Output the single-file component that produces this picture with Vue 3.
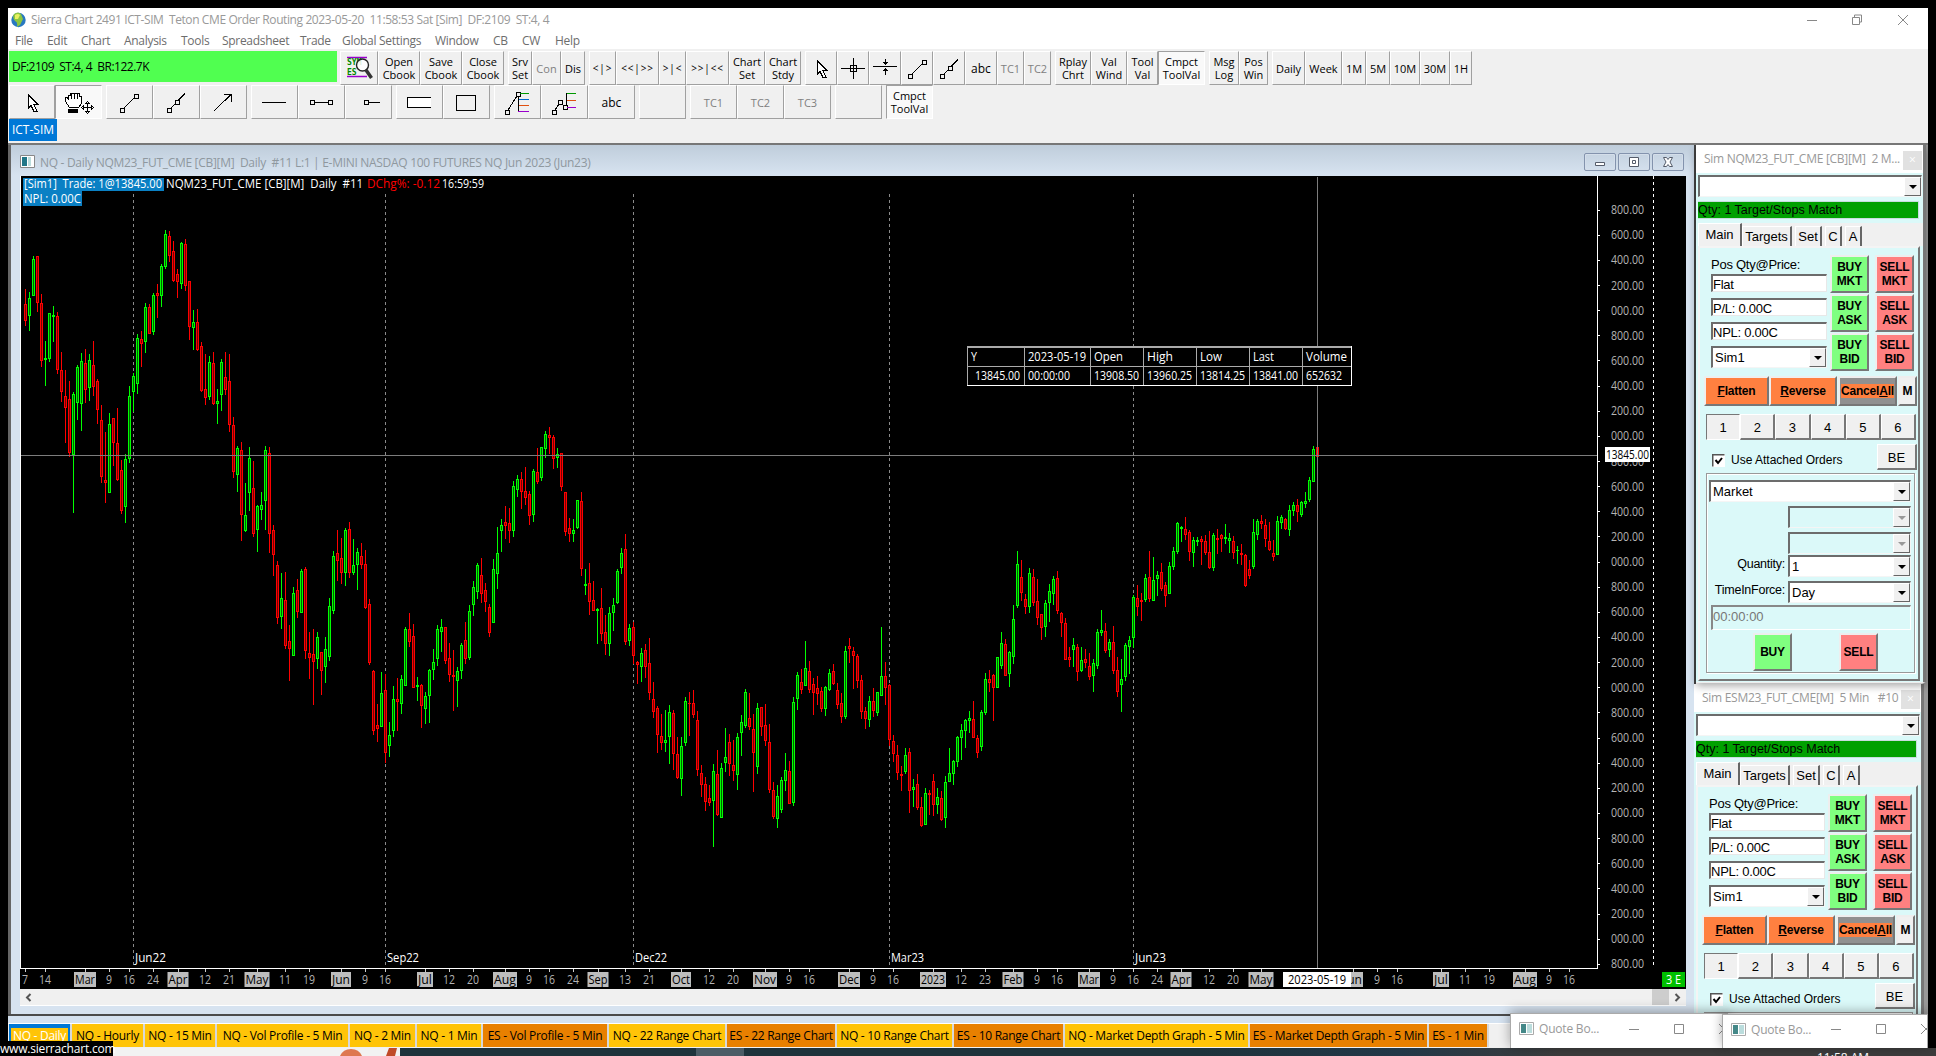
<script setup>
const menu = [
  ['File', 32], ['Edit', 34], ['Chart', 43], ['Analysis', 57], ['Tools', 41], ['Spreadsheet', 78],
  ['Trade', 42], ['Global Settings', 93], ['Window', 58], ['CB', 29], ['CW', 33], ['Help', 30],
]

const node = (x, y) => `M${x - 2} ${y - 2}h4v4h-4z`
const icons = {
  pointer: [{ d: 'M20 9.5v14l3-3 3 6h3l-3-7h4z', fill: '#fff' }],
  hand: [
    { d: 'M15.5 22.5l-4-6v-4h2l1 2v-4h2v-2h9v3h2v7l-3 4z', fill: '#fff' },
    { d: 'M17.5 9v5M20.5 9v5M23.5 9v5' },
    { d: 'M14.5 24.500h9v3h-9z', fill: '#000' },
    { d: 'M33.5 17v11M28 22.5h11' },
    { d: 'M31.5 18.5l2-2 2 2zM31.5 26.5l2 2 2-2zM29.5 20.500l-2 2 2 2zM37.5 20.500l2 2-2 2z', fill: '#fff' },
  ],
  cross: [{ d: 'M12 17.5h24M24.5 7v21' }, { d: 'M21.5 14.5h6v6h-6z' }],
  spread: [{ d: 'M12 15.5h24' }, { d: 'M24.5 8v5M22.5 11l2 2 2-2M24.5 24v-6M22.5 20l2-2 2 2' }],
  line: [{ d: `M19 23L29 13${node(17, 25)}${node(31, 11)}` }],
  ray: [{ d: `M19 23L23.5 18.5M26.5 15L33 8.5${node(17, 25)}${node(25, 17)}` }],
  arrow: [{ d: 'M15 26L32 9.5M25 9.5h7v7' }],
  hline: [{ d: 'M12 17.5h24' }],
  segment: [{ d: `M17 17.5h14${node(15, 17.5)}${node(33, 17.5)}` }],
  hray: [{ d: `M24 17.5h12${node(22, 17.5)}` }],
  band: [{ d: 'M36 12.5H12.5v10H36', fill: '#fff' }],
  box: [{ d: 'M14.5 10.5h19v15h-19z' }],
  fib: [
    { d: `M15 25L24 11${node(14, 27)}${node(25, 9)}M25.5 11v16` },
    { d: 'M27 8.5h9', stroke: '#090' }, { d: 'M26 14.5h10', stroke: '#06c' },
    { d: 'M26 20.5h10', stroke: '#e05010' }, { d: 'M25 26.5h11', stroke: '#90c' },
  ],
  fibext: [
    { d: `M15 25l4-6M22 19l2 2${node(14, 27)}${node(20, 17)}${node(25, 22)}M26.5 8v13` },
    { d: 'M27 8.5h9', stroke: '#090' }, { d: 'M27 15.5h9', stroke: '#e05010' }, { d: 'M27 22.5h9', stroke: '#90c' },
  ],
}

// label, width, state
const row1 = [
  [['@search', 38], ['Open\nCbook', 42], ['Save\nCbook', 42], ['Close\nCbook', 42]],
  [['Srv\nSet', 24], ['Con', 29, 'off'], ['Dis', 24]],
  [['<|>', 27, 'sp'], ['<<|>>', 43, 'sp'], ['>|<', 27, 'sp'], ['>>|<<', 43, 'sp'], ['Chart\nSet', 36], ['Chart\nStdy', 36]],
  [['@pointer', 32], ['@cross', 32], ['@spread', 32], ['@line', 32], ['@ray', 32], ['abc', 32, 'abc'], ['TC1', 27, 'off'], ['TC2', 27, 'off']],
  [['Rplay\nChrt', 36], ['Val\nWind', 36], ['Tool\nVal', 31], ['Cmpct\nToolVal', 47, 'on']],
  [['Msg\nLog', 30], ['Pos\nWin', 29]],
  [['Daily', 33], ['Week', 37], ['1M', 24], ['5M', 24], ['10M', 30], ['30M', 30], ['1H', 22]],
]
const row2 = [
  [['@pointer', 46], ['@hand', 47, 'on']],
  [['@line', 47], ['@ray', 47], ['@arrow', 47]],
  [['@hline', 47], ['@segment', 47], ['@hray', 47]],
  [['@band', 47], ['@box', 47]],
  [['@fib', 47], ['@fibext', 47], ['abc', 47, 'abc']],
  [['', 47]],
  [['TC1', 47, 'off'], ['TC2', 47, 'off'], ['TC3', 47, 'off']],
  [['', 47]],
  [['Cmpct\nToolVal', 47, 'on']],
]

// bars: direction, then high / body top / body bottom / low
const older = `r233,272,316,329 g240,257,303,342 g146,154,252,252 r147,147,269,293 r246,268,420,436 g368,413,417,486 g295,296,415,423 g277,301,305,371 r293,303,443,455 r397,444,501,528
r444,512,543,635 r473,520,660,671 g502,507,667,818 g431,436,530,575 g400,421,532,604 r389,426,496,531 g402,419,490,525 r368,431,488,512 r468,473,550,585 r536,575,723,740
r606,732,739,792 g557,585,765,765 r570,570,634,695 r544,635,731,734 r679,706,812,821 g664,677,801,844 g486,513,678,687 g452,460,501,554 g350,361,480,507 r342,363,375,436
g269,280,370,400 r272,280,349,350 g243,247,344,353 r220,244,250,308 g167,173,250,280 g78,90,174,180 r81,94,146,162 r107,133,211,214 r180,194,213,256 g110,112,219,233
r102,115,224,238 r212,212,331,366 g287,320,334,392 r285,320,391,395 r371,382,498,502 r402,495,517,536 g408,423,514,523 r397,427,532,536 g494,525,532,585 g416,423,509,551
r397,463,496,510 r402,474,587,606 r567,589,710,727 g643,648,718,763 r632,654,822,891 g740,822,866,868 g645,675,765,813 r682,753,874,881 g797,800,861,920 g763,797,809,836
g643,652,786,862 r645,661,872,923 r849,862,927,983 r943,955,1091,1108 g975,1041,1089,1121 r972,1046,1165,1173 r1111,1152,1172,1257 g1011,1028,1191,1192 r990,1020,1077,1092 g964,970,1078,1079
r959,965,1178,1200 r1129,1184,1196,1252 r1121,1187,1206,1320 g1129,1143,1199,1226 r1182,1182,1230,1294 g1142,1174,1219,1262 g1040,1062,1193,1205 g917,931,1073,1082 r862,923,942,996 r883,936,974,1004
g857,861,974,1009 r841,860,974,988 g886,955,974,980 g909,921,955,1019 r896,931,953,964 r915,950,1066,1069 r1043,1056,1209,1214 r1228,1231,1387,1398 r1317,1373,1381,1416 g1233,1289,1376,1377
r1239,1281,1444,1471 g1364,1397,1428,1456 g1270,1305,1387,1403 r1249,1304,1311,1387 g1241,1252,1316,1343 g1116,1120,1269,1270 r1079,1122,1154,1168 r1108,1140,1274,1275 g1247,1268,1272,1309 r1265,1268,1321,1380
g1286,1295,1329,1369 g1226,1229,1295,1367 g1173,1206,1227,1254 g1111,1120,1199,1218 g1095,1117,1128,1181 r1117,1117,1204,1213 r1158,1198,1241,1260 r1176,1240,1246,1335 g1220,1232,1256,1325 g1158,1164,1230,1252
r1103,1150,1199,1213 g1059,1075,1196,1201 g996,1012,1057,1087 g949,955,1023,1043 r936,981,1029,1053 r1001,1020,1050,1077 r1056,1064,1131,1142 g938,963,1104,1105 g855,923,976,1017 g834,848,864,920
r800,842,851,886 r805,845,864,896 g734,748,864,881 g719,730,757,776 r711,730,762,808 r698,761,778,797 r760,769,827,849 g703,709,822,841 r648,712,736,742 g645,646,726,734
g604,612,650,674 r593,614,621,664 r614,620,676,703 g648,665,673,700 r661,661,749,760 r763,764,867,878 r831,858,872,894 g834,861,874,894 g784,785,856,860 r763,787,963,983
g964,1004,1008,1033 r949,1001,1050,1085 r996,1046,1073,1074 g1066,1070,1073,1160`
const recent = `r564,624,702,723 r645,696,732,765 g621,639,732,768 g594,615,639,693 g507,513,609,612 g444,459,504,522 r402,447,726,735 g672,684,723,738 r666,681,768,792 r783,786,795,852
g744,759,801,846 r732,750,801,834 r714,789,879,900 r846,897,936,954 r918,924,1005,1059 r942,1008,1029,1050 g930,1020,1029,1056 g915,936,1011,1092 r930,939,1062,1110 r1011,1062,1134,1137
g1011,1038,1137,1188 g891,903,1029,1038 r876,909,912,1008 r870,909,945,954 r933,960,1110,1128 r1095,1119,1155,1191 r1131,1152,1206,1233 r1155,1194,1209,1218 g1092,1113,1203,1341 r1050,1122,1245,1248
g1089,1104,1254,1254 g984,1071,1089,1116 r1002,1026,1092,1128 r1020,1095,1113,1143 g999,1011,1125,1170 g945,966,999,1068 g867,876,978,984 r879,954,981,990 r942,987,1059,1176 g909,924,1101,1122
r921,921,981,1008 r912,975,1023,1038 r972,1026,1170,1179 r1146,1170,1251,1257 g1155,1188,1257,1284 g1131,1140,1230,1239 g1059,1110,1143,1173 r1083,1113,1212,1212 g891,906,1209,1218 g816,825,897,930
r807,846,870,882 g723,804,858,858 r783,813,870,879 r834,852,879,945 r828,864,882,915 r861,873,927,936 g858,861,927,948 g807,819,870,873 r792,813,852,855 r849,870,915,927
r879,909,951,969 g738,753,951,957 r714,738,747,789 r741,753,768,867 r762,768,843,864 r825,840,936,957 r921,933,957,987 g888,903,960,981 r864,903,933,951 g876,876,939,948
g681,828,888,888 r786,828,864,915 r852,855,1020,1038 r1005,1023,1062,1086 r1035,1065,1119,1140 r1098,1122,1128,1173 g1044,1065,1116,1122 r1044,1056,1173,1239 g1137,1161,1170,1221 r1122,1152,1224,1230
r1191,1221,1278,1281 g1164,1179,1275,1275 r1170,1179,1185,1245 r1122,1143,1215,1248 g1164,1191,1215,1242 r1173,1194,1260,1263 g1128,1146,1254,1284 g1044,1119,1146,1146 g1080,1083,1122,1155 g1008,1011,1086,1101
g972,990,1014,1080 g957,960,993,1044 g933,954,963,999 r903,957,1014,1014 r1005,1014,1059,1074 g930,936,1041,1053 g819,837,939,945 r810,837,849,876 r822,825,864,963 g771,771,864,864
g696,729,798,807 r717,732,828,828 g753,756,822,861 g615,657,771,792 g453,492,618,624 r480,531,579,603 r582,597,621,642 g504,519,621,639 r507,531,609,618 r537,603,654,675
r642,642,684,720 g600,609,681,711 g552,573,609,666 g528,537,582,615 r513,534,633,642 r636,639,669,711 r654,669,780,780 r741,771,780,801 g714,735,750,801 r732,741,816,843
g741,780,813,816 r747,777,789,804 r759,798,831,840 g777,789,828,876 g687,696,798,807 g630,690,699,708 r669,693,753,759 g717,726,750,771 r678,726,813,822 r771,810,876,891
g777,837,855,936 g729,735,831,843 g708,720,741,822 g585,591,714,744 r555,594,621,648 r579,600,606,663 g522,534,600,606 r453,531,597,606 g471,540,603,603 g513,525,537,588
r489,516,567,573 r546,555,588,621 g486,498,582,582 g441,453,501,510 g366,369,456,462 g378,381,387,426 r351,387,405,420 r390,396,456,483 g411,420,459,501 g411,420,426,438
r408,417,426,495 r405,423,459,465 r393,456,504,507 g399,405,504,513 r387,414,420,462 r402,405,417,456 g372,411,417,432 g399,414,423,459 r408,423,459,477 g438,450,453,492
r432,459,465,495 r462,465,558,561 r480,507,528,537 g357,396,501,507 g357,363,405,420 r345,363,372,387 r357,375,417,441 r366,423,450,453 r420,459,471,483 g348,363,465,465
g345,351,369,387 r354,357,387,390 g315,330,390,408 g306,315,333,348 r297,315,336,366 g303,306,345,351 g276,303,312,324 g231,240,300,306 g138,147,245,246 r120,141,171,172`

function parse(text, top, scale) {
  return text.split(/\s+/).map((s) => ({
    up: s[0] === 'g',
    y: s.slice(1).split(',').map((v) => Math.round(top + v / scale)),
  }))
}
const bars = [...parse(older, 200, 2.613), ...parse(recent, 400, 3)].map((b, i) => {
  const [hi, top, bottom, lo] = b.y
  return { x: 25 + i * 4, up: b.up, hi, lo, top, h: Math.max(bottom - top, 1) }
})

const quarters = [['Jun22', 133, 31], ['Sep22', 385, 32], ['Dec22', 633, 32], ['Mar23', 889, 33], ['Jun23', 1133, 31]]
const levels = ['800', '600', '400', '200', '000']
const prices = Array.from({ length: 31 }, (_, i) => ({ t: levels[i % 5] + '.00', y: 209.6 + i * 25.14 }))
const boxes = { Mar: 22, Apr: 21, May: 25, Jun: 20, Jul: 16, Aug: 24, Sep: 21, Oct: 20, Nov: 24, Dec: 22, 2023: 26, Feb: 21 }
const dates = `7:25 14:45 Mar:85 9:109 16:129 24:153 Apr:178 12:205 21:229 May:257 11:285 19:309 Jun:341 9:365 16:385 Jul:425 12:449 20:473 Aug:505 9:529 16:549 24:573
Sep:598 13:625 21:649 Oct:681 12:709 20:733 Nov:765 9:789 16:809 Dec:849 9:873 16:893 2023:933 12:961 23:985 Feb:1013 9:1037 16:1057 Mar:1089 9:1113 16:1133 24:1157 Apr:1181 12:1209 20:1233
May:1261 Jun:1353 9:1377 16:1397 Jul:1441 11:1465 19:1489 Aug:1525 9:1549 16:1569`.split(/\s+/).map((s) => {
  const [t, x] = s.split(':')
  return { t, x: +x, box: boxes[t], w: boxes[t] ? boxes[t] - 2 : t.length * 6 }
})

const quote = [
  ['Y', '13845.00', 967], ['2023-05-19', '00:00:00', 1024], ['Open', '13908.50', 1090], ['High', '13960.25', 1143],
  ['Low', '13814.25', 1196], ['Last', '13841.00', 1249], ['Volume', '652632', 1302],
]
const quoteW = { Y: 6, '2023-05-19': 58, Open: 29, High: 26, Low: 22, Last: 21, Volume: 41 }

const panels = [
  { title: 'Sim NQM23_FUT_CME [CB][M]  2 M...', cls: 'first' },
  { title: 'Sim ESM23_FUT_CME[M]  5 Min   #10', cls: 'second' },
]

const chartTabs = [
  ['NQ - Daily', 63, 'cur'], ['NQ - Hourly', 73], ['NQ - 15 Min', 72], ['NQ - Vol Profile - 5 Min', 133], ['NQ - 2 Min', 67], ['NQ - 1 Min', 66],
  ['ES - Vol Profile - 5 Min', 126, 'es'], ['NQ - 22 Range Chart', 118], ['ES - 22 Range Chart', 110, 'es'], ['NQ - 10 Range Chart', 117],
  ['ES - 10 Range Chart', 111, 'es'], ['NQ - Market Depth Graph - 5 Min', 185], ['ES - Market Depth Graph - 5 Min', 179, 'es'], ['ES - 1 Min', 60, 'es'],
]
</script>

<template>
  <div class="screen">
    <div class="window">
      <div class="titlebar">
        <svg class="globe" width="15" height="16" viewBox="0 0 15 16">
          <circle cx="7.5" cy="8" r="7.2" fill="#2878c0" />
          <path d="M3 2q4-3 7 0l2 5-3 6-3 2q1-5-2-6-3-3-1-7" fill="#8dc63f" />
          <path d="M4 3q3-2 5 0l-2 4-3 0" fill="#e8f060" />
        </svg>
        <span class="app-title">Sierra Chart 2491 ICT-SIM&nbsp; Teton CME Order Routing 2023-05-20&nbsp; 11:58:53 Sat [Sim]&nbsp; DF:2109&nbsp; ST:4, 4</span>
        <svg class="sysbtns" width="110" height="14" viewBox="0 0 110 14" fill="none" stroke="#888">
          <path d="M0 7.5h10M45.5 4.5h7v7h-7zM47.5 4v-2h7v7h-2M91 2l10 10M101 2L91 12" />
        </svg>
      </div>
      <div class="menubar">
        <span v-for="m in menu" :key="m[0]" :style="{ width: m[1] + 'px' }">{{ m[0] }}</span>
      </div>

      <div class="toolbars">
        <div v-for="(row, r) in [row1, row2]" :key="r" class="toolrow">
          <div v-if="r === 0" class="status">DF:2109&nbsp; ST:4, 4&nbsp; BR:122.7K</div>
          <div v-for="(group, g) in row" :key="g" class="group">
            <div v-for="(b, i) in group" :key="i" class="tool" :class="b[2]" :style="{ width: b[1] + 'px' }">
              <svg v-if="b[0] === '@search'" width="30" height="26" viewBox="0 0 30 26">
                <path d="M3 2.5h20M3 21.5h20" stroke="#90c" stroke-width="1.5" />
                <text class="sym" x="3" y="10">SYM</text>
                <text class="sym" x="3" y="20">ES</text>
                <circle cx="18.5" cy="10" r="6" fill="#fff" fill-opacity=".85" stroke="#222" stroke-width="1.4" />
                <path d="M22 15l5.5 8" stroke="#333" stroke-width="3.5" />
              </svg>
              <svg v-else-if="b[0][0] === '@'" width="45" height="32" viewBox="2 1 45 32" shape-rendering="crispEdges">
                <path v-for="(p, k) in icons[b[0].slice(1)]" :key="k" :d="p.d" :fill="p.fill || 'none'" :stroke="p.stroke || '#000'" />
              </svg>
              <span v-else>{{ b[0] }}</span>
            </div>
          </div>
        </div>
        <div class="session">ICT-SIM</div>
      </div>

      <div class="mdi">
        <div class="chart-window">
          <div class="chart-title">
            <svg width="15" height="13" viewBox="0 0 15 13">
              <path d="M.5.5h14v12h-14z" fill="#fff" stroke="#888" />
              <path d="M2 2h5v9H2z" fill="#278" /><path d="M8 2h3v9H8z" fill="#bdd" />
            </svg>
            <span>NQ - Daily NQM23_FUT_CME [CB][M]&nbsp; Daily&nbsp; #11 L:1 | E-MINI NASDAQ 100 FUTURES NQ Jun 2023 (Jun23)</span>
            <div class="mdi-btns">
              <i><svg width="12" height="12" viewBox="0 0 12 12"><path d="M1.5 6.5h9v3h-9z" /></svg></i>
              <i><svg width="12" height="12" viewBox="0 0 12 12"><path d="M1.5 1.5h9v9h-9zM4.5 4.5h3v3h-3z" /></svg></i>
              <i><svg width="12" height="12" viewBox="0 0 12 12"><path d="M1.5 1.5h3l1.5 2 1.5-2h3L8 6l2.5 4.5h-3L6 8.5l-1.5 2h-3L4 6z" /></svg></i>
            </div>
          </div>

          <svg class="chart" width="1666" height="813" viewBox="20 176 1666 813">
            <g shape-rendering="crispEdges">
              <path v-for="q in quarters" :key="q[1]" :d="`M${q[1] + 0.5} 194V966`" stroke="#8a8a8a" stroke-dasharray="3 3" />
              <path d="M20.5 176V968M20 968.5H1598M1597.5 176V969" stroke="#fff" />
              <path d="M1653.5 176V967" stroke="#fff" stroke-dasharray="3 3" />
              <path v-for="p in prices" :key="p.y" :d="`M1598 ${Math.round(p.y) + 0.5}h2`" stroke="#fff" />
              <path v-for="d in dates" :key="d.x" :d="`M${d.x + 0.5} 969v3`" stroke="#ccc" />
              <g v-for="b in bars" :key="b.x" :class="b.up ? 'up' : 'down'">
                <rect class="wick" :x="b.x" :y="b.hi" width="1" :height="b.lo - b.hi" />
                <rect class="edge" :x="b.x - 1" :y="b.top" width="3" :height="b.h" />
                <rect v-if="b.h > 2" class="core" :x="b.x" :y="b.top + 1" width="1" :height="b.h - 2" />
              </g>
              <path d="M21 455.5H1597M1317.5 177V968" stroke="#7c7c7c" />
            </g>

            <path d="M23 178h141v13H82v15H23z" fill="#0a80c4" />
            <g class="bright">
              <text x="24" y="188" textLength="138" lengthAdjust="spacingAndGlyphs">[Sim1]&#160; Trade: 1@13845.00</text>
              <text x="24" y="203" textLength="57" lengthAdjust="spacingAndGlyphs">NPL: 0.00C</text>
              <text x="166" y="188" textLength="197" lengthAdjust="spacingAndGlyphs">NQM23_FUT_CME [CB][M]&#160; Daily&#160; #11</text>
              <text class="chg" x="367" y="188" textLength="73" lengthAdjust="spacingAndGlyphs">DChg%: -0.12</text>
              <text x="442" y="188" textLength="42" lengthAdjust="spacingAndGlyphs">16:59:59</text>
              <text v-for="q in quarters" :key="q[0]" :x="q[1] + 2" y="962" :textLength="q[2]" lengthAdjust="spacingAndGlyphs">{{ q[0] }}</text>
            </g>
            <g class="axis">
              <text v-for="p in prices" :key="p.y" x="1611" :y="p.y + 4.5" textLength="33" lengthAdjust="spacingAndGlyphs">{{ p.t }}</text>
              <g v-for="d in dates" :key="d.x">
                <rect v-if="d.box" :x="d.x - d.box / 2" y="972" :width="d.box" height="15" fill="#bdbdbd" />
                <text :class="{ month: d.box }" :x="d.x - d.w / 2" y="984" :textLength="d.w" lengthAdjust="spacingAndGlyphs">{{ d.t }}</text>
              </g>
            </g>
            <path d="M1605 447h45v15h-45zM1283 972h68v15h-68z" fill="#fff" />
            <text class="tag" x="1606" y="459" textLength="43" lengthAdjust="spacingAndGlyphs">13845.00</text>
            <text class="tag" x="1288" y="984" textLength="58" lengthAdjust="spacingAndGlyphs">2023-05-19</text>
            <path d="M1662 972h23v15h-23z" fill="#00c000" />
            <text class="bright" x="1666" y="984" textLength="15" lengthAdjust="spacingAndGlyphs">3 E</text>

            <g>
              <path d="M967 346h385v40H967z" fill="#000" />
              <g class="bright">
                <template v-for="(c, i) in quote" :key="c[0]">
                  <text :x="c[2] + 4" y="361" :textLength="quoteW[c[0]]" lengthAdjust="spacingAndGlyphs">{{ c[0] }}</text>
                  <text :x="c[2] + (i ? 4 : 8)" y="380" :textLength="i === 1 ? 42 : i === 6 ? 36 : 45" lengthAdjust="spacingAndGlyphs">{{ c[1] }}</text>
                </template>
              </g>
              <g shape-rendering="crispEdges" fill="none">
                <path d="M967 366.5h385" stroke="#aaa" />
                <path v-for="c in quote" :key="c[2]" :d="`M${c[2] + 0.5} 347v39`" stroke="#aaa" />
                <path d="M967 347h385" stroke="#aaa" stroke-width="2" />
                <path d="M967 385.5h385M1351.5 346v40" stroke="#fff" />
              </g>
            </g>
          </svg>

          <div class="scroll">
            <svg width="7" height="9" viewBox="0 0 7 9"><path d="M5.5 1L2 4.5 5.5 8" /></svg>
            <b></b>
            <svg width="7" height="9" viewBox="0 0 7 9"><path d="M1.5 1L5 4.5 1.5 8" /></svg>
          </div>
        </div>

        <div class="side">
          <div v-for="p in panels" :key="p.cls" class="panel" :class="p.cls">
            <div class="panel-title"><span>{{ p.title }}</span><em>×</em></div>
            <div class="panel-body">
              <div class="combo symbol"><span></span><u></u></div>
              <div class="match">Qty: 1 Target/Stops Match</div>
              <div class="tabs">
                <span class="main">Main</span><span class="targets">Targets</span><span class="set">Set</span><span class="sm">C</span><span class="sm">A</span>
              </div>
              <div class="page">
                <div class="position">
                  <div class="fields">
                    <label>Pos Qty@Price:</label>
                    <div class="field">Flat</div>
                    <div class="field">P/L: 0.00C</div>
                    <div class="field">NPL: 0.00C</div>
                    <div class="combo acct"><span>Sim1</span><u></u></div>
                  </div>
                  <div class="orders">
                    <template v-for="k in ['MKT', 'ASK', 'BID']" :key="k">
                      <div class="btn buy">BUY<br />{{ k }}</div>
                      <div class="btn sell">SELL<br />{{ k }}</div>
                    </template>
                  </div>
                </div>
                <div class="actions">
                  <div class="btn orange fl"><span><s>F</s>latten</span></div>
                  <div class="btn orange rv"><span><s>R</s>everse</span></div>
                  <div class="btn cancel"><span>Cancel<s>A</s>ll</span></div>
                  <div class="btn m">M</div>
                </div>
                <div class="qty">
                  <span v-for="n in 6" :key="n" :class="{ pressed: n === 1 }">{{ n }}</span>
                </div>
                <div class="attach">
                  <svg width="13" height="13" viewBox="0 0 13 13">
                    <path d="M0 0h13v13H0z" fill="#fff" /><path d="M.5 12.5V.5h12" fill="none" stroke="#555" stroke-width="2" />
                    <path d="M3.5 6l2.5 3 4-5" fill="none" stroke="#000" stroke-width="2" />
                  </svg>
                  <span>Use Attached Orders</span>
                  <div class="be">BE</div>
                </div>
                <div class="entry">
                  <div class="combo"><span>Market</span><u></u></div>
                  <div class="combo short off"><span></span><u></u></div>
                  <div class="combo short off"><span></span><u></u></div>
                  <div class="line q"><label>Quantity:</label><div class="combo short"><span>1</span><u></u></div></div>
                  <div class="line"><label>TimeInForce:</label><div class="combo short"><span>Day</span><u></u></div></div>
                  <div class="time">00:00:00</div>
                  <div class="send"><div class="btn buy">BUY</div><div class="btn sell">SELL</div></div>
                </div>
              </div>
            </div>
          </div>
        </div>
      </div>

      <div class="under"></div>
      <div class="chart-tabs">
        <div v-for="t in chartTabs" :key="t[0]" :class="t[2]" :style="{ width: t[1] + 'px' }"><span>{{ t[0] }}</span></div>
      </div>
    </div>

    <div class="taskbar">
      <div class="search-box">
        <svg width="60" height="8" viewBox="0 0 60 8"><path d="M0 8q3-7 11-7t11 7z" fill="#de7850" /><path d="M46 8l3-8h8l-2 8z" fill="#c04a28" /></svg>
      </div>
      <div class="task"></div>
      <div class="clock">11:58 AM</div>
    </div>

    <div v-for="n in 2" :key="n" class="quote-board" :class="'qb' + n">
      <svg width="15" height="13" viewBox="0 0 15 13">
        <path d="M.5.5h14v12h-14z" fill="#fff" stroke="#aaa" />
        <path d="M2 2h5v9H2z" fill="#488" /><path d="M8 2h5v9H8z" fill="#bdd" />
      </svg>
      <span>Quote Bo...</span>
      <svg width="108" height="12" viewBox="0 0 108 12" fill="none" stroke="#888">
        <path d="M0 6.5h10M45.5 1.5h9v9h-9zM90 1l10 10M100 1L90 11" />
      </svg>
    </div>
    <div class="link">www.sierrachart.com</div>
  </div>
</template>

<style>
body {
  margin: 0;
  background: #000;
  overflow: hidden;
}
</style>

<style scoped>
.screen {
  position: relative;
  box-sizing: border-box;
  width: 1936px;
  height: 1056px;
  padding: 8px 8px 0;
  overflow: hidden;
  background: #000;
  font-family: 'Open Sans', 'Noto Sans', sans-serif;
  font-size: 12px;
  color: #000;
}
.screen * {
  box-sizing: border-box;
}
.window {
  display: flex;
  flex-direction: column;
  height: 1040px;
  background: #f0f0f0;
}
.titlebar {
  display: flex;
  align-items: center;
  height: 23px;
  padding-left: 3px;
  background: #fff;
  color: #999;
}
.app-title {
  flex: 1;
  margin-left: 5px;
  font-size: 12px;
  letter-spacing: -0.4px;
}
.sysbtns {
  margin-right: 11px;
}
.menubar {
  display: flex;
  height: 18px;
  padding-left: 7px;
  background: #fff;
  color: #6d6d6d;
  font-size: 12px;
  line-height: 19px;
  letter-spacing: -0.3px;
  white-space: nowrap;
}

.toolbars {
  height: 94px;
  padding: 2px 0 0 1px;
}
.toolrow {
  display: flex;
  gap: 4px;
  height: 34px;
}
.status {
  width: 328px;
  height: 31px;
  margin: 0 -1px 0 0;
  background: #50ff50;
  line-height: 31px;
  padding-left: 3px;
  letter-spacing: -0.5px;
}
.group {
  display: flex;
}
.tool {
  display: flex;
  align-items: center;
  justify-content: center;
  height: 34px;
  overflow: hidden;
  border: 1px solid #fff;
  border-right-color: #a0a0a0;
  border-bottom-color: #a0a0a0;
  font-size: 11px;
  line-height: 13px;
  text-align: center;
  white-space: pre;
}
.tool svg {
  flex: none;
}
.tool.on {
  background: #f9f9f9;
  border-color: #a0a0a0 #fff #fff #a0a0a0;
}
.tool.off {
  color: #808080;
}
.tool.sp {
  letter-spacing: 0.8px;
  font-size: 10px;
}
.tool.abc {
  font-size: 12px;
}
.sym {
  font: bold 8px 'DejaVu Sans Mono', monospace;
  fill: #080;
}
.session {
  width: 48px;
  height: 22px;
  background: #0078d7;
  color: #fff;
  line-height: 21px;
  text-align: center;
}

.mdi {
  display: flex;
  height: 871px;
  border-top: 2px solid #777;
  overflow: hidden;
}
.chart-window {
  display: flex;
  flex-direction: column;
  width: 1688px;
  padding: 0 10px 0 9px;
  background: linear-gradient(#bfcddb, #d7e3f0 30px, #d7e3f0);
  border-left: 3px solid #666;
  border-right: 2px solid #444;
}
.chart-title {
  display: flex;
  align-items: center;
  flex: none;
  height: 31px;
  color: #8f989f;
}
.chart-title span {
  flex: 1;
  padding: 3px 0 0 5px;
  font-size: 12px;
  letter-spacing: -0.3px;
}
.chart-title > svg {
  margin-top: 2px;
}
.mdi-btns {
  display: flex;
  gap: 2px;
  padding-top: 2px;
}
.mdi-btns i {
  display: flex;
  align-items: center;
  justify-content: center;
  width: 32px;
  height: 18px;
  border: 1px solid #8393ad;
  border-radius: 2px;
  box-shadow: inset 0 0 0 1px #d4deea;
}
.mdi-btns path {
  fill: #fff;
  stroke: #555c6a;
}
.chart {
  display: block;
  flex: none;
  background: #000;
}
.chart text {
  font-family: 'Open Sans', 'Noto Sans', sans-serif;
  font-size: 12px;
}
.up .wick,
.up .edge {
  fill: #0f0;
}
.up .core {
  fill: #006400;
}
.down .wick,
.down .edge {
  fill: #f00;
}
.down .core {
  fill: #780000;
}
.bright {
  fill: #fff;
}
.bright .chg {
  fill: #f00;
}
.axis {
  fill: #b4b4b4;
}
.axis .month,
.tag {
  fill: #000;
}
.scroll {
  display: flex;
  align-items: center;
  flex: none;
  width: 1666px;
  height: 17px;
  padding: 0 5px;
  background: #f0f0f0;
  border-bottom: 1px solid #fff;
}
.scroll b {
  width: 17px;
  height: 16px;
  margin: 0 5px 0 auto;
  background: #cdcdcd;
}
.scroll path {
  fill: none;
  stroke: #555;
  stroke-width: 2;
}

.side {
  flex: 1;
  background: linear-gradient(90deg, #fff 226px, #999 228px);
  font-family: 'Liberation Sans', Arial, sans-serif;
}
.panel {
  position: relative;
  width: 230px;
  height: 538px;
  background: #dbf9f9;
  border-right: 3px solid #777;
}
.panel.first {
  z-index: 1;
  border-bottom: 1px solid #eee;
  box-shadow: 0 3px 8px #0005;
}
.panel.second {
  margin: 1px 0 0 -2px;
}
.panel-title {
  display: flex;
  align-items: center;
  height: 28px;
  padding-left: 8px;
  background: #fff;
  color: #999;
  font-family: 'Open Sans', 'Noto Sans', sans-serif;
  white-space: pre;
}
.panel-title span {
  flex: 1;
  padding-bottom: 1px;
  letter-spacing: -0.28px;
}
.panel-title em {
  width: 19px;
  height: 19px;
  margin: 3px 1px 0 0;
  background: #e1e1e1;
  color: #fff;
  font-style: normal;
  line-height: 18px;
  text-align: center;
}
.panel-body {
  padding: 2px 0 0 2px;
}
.combo {
  display: flex;
  height: 22px;
  background: #fff;
  border: 1px solid #f5f5f5;
  border-top: 2px solid #6c6c6c;
  border-left: 2px solid #6c6c6c;
  font-size: 13px;
  line-height: 20px;
}
.combo span {
  flex: 1;
  padding-left: 2px;
}
.combo u {
  display: flex;
  align-items: center;
  justify-content: center;
  width: 17px;
  background: #f0f0f0;
  border: 1px solid #fff;
  border-right-color: #666;
  border-bottom-color: #666;
}
.combo u::after {
  content: '';
  border: 4px solid transparent;
  border-top-color: #000;
  border-bottom: 0;
}
.combo.off {
  background: none;
}
.combo.off u::after {
  border-top-color: #999;
}
.symbol {
  width: 224px;
}
.match {
  width: 221px;
  height: 18px;
  margin-top: 4px;
  background: #00a000;
  border: 1px solid #c8dcdc;
  border-left: 0;
  font-size: 12.5px;
  line-height: 17px;
}
.tabs {
  display: flex;
  align-items: flex-end;
  height: 23px;
  margin-top: 4px;
  gap: 3px;
  background: #f0f0f0;
  font-size: 13px;
}
.tabs span {
  width: 17px;
  height: 20px;
  border-top: 1px solid #fff;
  border-left: 1px solid #fff;
  border-right: 2px solid #666;
  line-height: 19px;
  text-align: center;
}
.tabs .main {
  width: 44px;
  height: 23px;
  margin-right: -3px;
  line-height: 22px;
}
.tabs .targets {
  width: 50px;
}
.tabs .set {
  width: 27px;
}
.page {
  height: 435px;
  margin-right: 3px;
  padding-left: 4px;
  border: 2px solid #f4f4f4;
  border-right: 2px solid #777;
  border-bottom: 2px solid #777;
}
.position {
  display: flex;
  justify-content: space-between;
  width: 210px;
  padding: 7px 0 0 7px;
}
.fields {
  width: 116px;
  padding-top: 1px;
  font-size: 13px;
}
.fields label {
  display: block;
  height: 18px;
  line-height: 18px;
  letter-spacing: -0.25px;
}
.field {
  height: 18px;
  margin-bottom: 6px;
  border: 1px solid #e8e8e8;
  border-top: 2px solid #6c6c6c;
  border-left: 2px solid #6c6c6c;
  background: #fff;
  line-height: 17px;
  letter-spacing: -0.25px;
}
.orders {
  display: grid;
  grid-template-columns: 39px 39px;
  gap: 1px 6px;
}
.btn {
  display: flex;
  align-items: center;
  justify-content: center;
  height: 38px;
  border: 2px solid #eee;
  border-right-color: #777;
  border-bottom-color: #777;
  font-size: 12px;
  font-weight: bold;
  line-height: 14px;
  text-align: center;
  letter-spacing: -0.2px;
}
.btn s {
  text-decoration: underline;
}
.buy {
  background: #80ff80;
}
.sell {
  background: #ff8080;
}
.actions {
  display: flex;
  margin-top: 5px;
}
.actions .btn {
  height: 30px;
}
.orange {
  background: #ff8040;
}
.fl {
  width: 65px;
}
.rv {
  width: 68px;
}
.cancel {
  width: 59px;
  margin: 0 1px;
  background: #909090;
}
.cancel span {
  background: #ff8040;
}
.m {
  width: 19px;
  background: #f0f0f0;
}
.qty {
  display: flex;
  margin: 8px 0 0 2px;
  width: 210px;
}
.qty span {
  flex: 1;
  height: 26px;
  background: #f0f0f0;
  border: 1px solid #fff;
  border-right: 2px solid #777;
  border-bottom: 2px solid #777;
  font-size: 13px;
  line-height: 25px;
  text-align: center;
}
.qty .pressed {
  border: 1px solid #fff;
  border-top-color: #777;
  border-left-color: #777;
}
.attach {
  display: flex;
  align-items: center;
  width: 213px;
  height: 26px;
  margin-top: 4px;
  padding-left: 8px;
  font-size: 12px;
}
.attach span {
  flex: 1;
  padding: 5px 0 0 6px;
}
.attach svg {
  margin-top: 6px;
}
.be {
  width: 40px;
  height: 26px;
  background: #f0f0f0;
  border: 1px solid #fff;
  border-right: 2px solid #777;
  border-bottom: 2px solid #777;
  font-size: 13px;
  line-height: 25px;
  text-align: center;
}
.entry {
  display: flex;
  flex-direction: column;
  width: 209px;
  height: 200px;
  margin: 3px 0 0 2px;
  padding: 6px 3px 0 2px;
  border: 1px solid #999;
  box-shadow: inset 1px 1px #fff, 1px 1px #fff;
}
.short {
  width: 123px;
  margin: 4px 0 0 auto;
}
.line {
  display: flex;
  margin-top: 4px;
  justify-content: flex-end;
  font-size: 12.5px;
}
.line.q {
  margin-top: 1px;
}
.line label {
  width: 76px;
  padding-right: 3px;
  line-height: 19px;
  text-align: right;
  letter-spacing: -0.25px;
}
.line .short {
  margin: 0;
}
.time {
  height: 25px;
  margin: 2px 0 3px 2px;
  border: 1px solid #fff;
  border-top: 2px solid #888;
  border-left: 2px solid #888;
  color: #777;
  font-size: 13px;
  line-height: 19px;
}
.send {
  display: flex;
  gap: 47px;
  padding-left: 44px;
}
.send .btn {
  width: 39px;
}

.under {
  height: 10px;
  background: #d5e2f0;
  border-top: 2px solid #4b4b4b;
  border-bottom: 1px solid #fff;
}
.chart-tabs {
  display: flex;
  flex: 1;
  padding-left: 1px;
}
.chart-tabs div {
  flex: none;
  height: 23px;
  overflow: hidden;
  background: #ffc408;
  border-right: 2px solid #d8d8d8;
  font-size: 12px;
  line-height: 23px;
  text-align: center;
  white-space: nowrap;
  letter-spacing: -0.28px;
}
.chart-tabs .es {
  background: #e88000;
}
.chart-tabs .cur {
  background: #0078d7;
  padding: 4px 2px;
  color: #fff;
  line-height: 16px;
}
.cur span {
  display: block;
  background: #ffc408;
}

.taskbar {
  display: flex;
  height: 8px;
  margin: 0 -8px;
  background: linear-gradient(90deg, #1e333c 1200px, #223848 1400px, #3c3c3c 1560px);
  overflow: hidden;
}
.search-box {
  width: 400px;
  padding-left: 340px;
  background: #f2f2f2;
}
.search-box svg {
  display: block;
}
.task {
  width: 48px;
  margin-left: 296px;
  background: #4b5c66;
}
.clock {
  margin-left: 1073px;
  color: #fff;
  font-size: 12px;
  line-height: 16px;
  padding-top: 2px;
}
.quote-board {
  position: absolute;
  left: 1510px;
  top: 1013px;
  display: flex;
  align-items: center;
  width: 218px;
  height: 35px;
  padding: 0 0 5px 8px;
  overflow: hidden;
  background: #fff;
  border: 1px solid #aaa;
  border-bottom: 0;
  color: #999;
  box-shadow: 0 -2px 12px #0005;
}
.quote-board span {
  width: 90px;
  flex: none;
  margin-left: 5px;
  white-space: nowrap;
  letter-spacing: -0.2px;
}
.quote-board svg {
  flex: none;
}
.qb2 {
  left: 1722px;
  top: 1014px;
  width: 206px;
  height: 34px;
}
.qb2 span {
  width: 80px;
}
.link {
  position: absolute;
  left: 0;
  bottom: 0;
  width: 113px;
  height: 15px;
  background: #000;
  color: #fff;
  font-size: 12px;
  line-height: 15px;
  letter-spacing: -0.2px;
}
</style>
